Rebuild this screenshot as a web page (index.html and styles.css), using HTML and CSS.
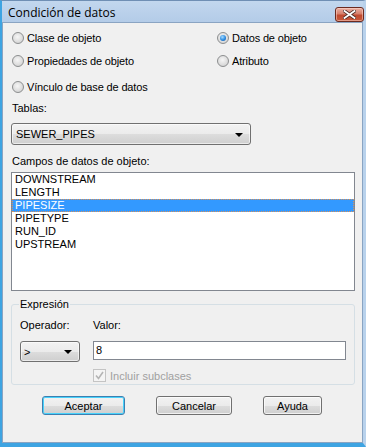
FILE: index.html
```html
<!DOCTYPE html>
<html lang="es">
<head>
  <meta charset="UTF-8" />
  <title>Condición de datos</title>
  <link rel="stylesheet" href="styles.css">
</head>
<body>
  <div class="window">
    <div class="titlebar">
      <span class="title">Condición de datos</span>
      <button class="close" aria-label="Cerrar">
        <svg width="13" height="9" viewBox="0 0 13 9">
          <path d="M1.5 1 L11.5 8 M11.5 1 L1.5 8" stroke="#4a2a24" stroke-width="3.4" stroke-linecap="square"/>
          <path d="M1.5 1 L11.5 8 M11.5 1 L1.5 8" stroke="#ffffff" stroke-width="1.8" stroke-linecap="square"/>
        </svg>
      </button>
    </div>

    <div class="client">
      <div class="options">
        <label class="radio"><span class="dot"></span>Clase de objeto</label>
        <label class="radio"><span class="dot on"></span>Datos de objeto</label>
        <label class="radio"><span class="dot"></span>Propiedades de objeto</label>
        <label class="radio"><span class="dot"></span>Atributo</label>
        <label class="radio"><span class="dot"></span>Vínculo de base de datos</label>
      </div>

      <div class="field-label tablas">Tablas:</div>
      <div class="combo tables">
        <span>SEWER_PIPES</span>
        <span class="arrow"></span>
      </div>

      <div class="field-label campos">Campos de datos de objeto:</div>
      <ul class="listbox">
        <li>DOWNSTREAM</li>
        <li>LENGTH</li>
        <li class="selected">PIPESIZE</li>
        <li>PIPETYPE</li>
        <li>RUN_ID</li>
        <li>UPSTREAM</li>
      </ul>

      <fieldset class="group">
        <legend>Expresión</legend>
        <div class="expr">
          <div class="expr-col">
            <div class="field-label">Operador:</div>
            <div class="combo operator">
              <span>&gt;</span>
              <span class="arrow"></span>
            </div>
          </div>
          <div class="expr-col grow">
            <div class="field-label">Valor:</div>
            <div class="textbox">8</div>
          </div>
        </div>
        <label class="check">
          <span class="box">
            <svg width="9" height="9" viewBox="0 0 9 9">
              <path d="M1 4.5 L3.5 7.5 L8 1" fill="none" stroke="#b4b4b4" stroke-width="1.6"/>
            </svg>
          </span>
          Incluir subclases
        </label>
      </fieldset>

      <div class="buttons">
        <button class="btn default ok">Aceptar</button>
        <button class="btn cancel">Cancelar</button>
        <button class="btn help">Ayuda</button>
      </div>
    </div>
  </div>
</body>
</html>
```

FILE: styles.css
```css
* {
  margin: 0;
  padding: 0;
  box-sizing: border-box;
}
body {
  width: 366px;
  height: 447px;
  background: #ffffff;
  font-family: "Liberation Sans", Arial, sans-serif;
  font-size: 11px;
  color: #000;
  overflow: hidden;
}
.window {
  width: 366px;
  height: 447px;
  display: flex;
  flex-direction: column;
  background: linear-gradient(#c2d7ee, #b4cce8 20px, #aac5e4);
  border-left: 2px solid #3ea4e2;
  border-right: 3px solid #b9d2ec;
  border-bottom: 4px solid #3ea4e2;
  border-top: 1px solid #6f8fb4;
}
.titlebar {
  height: 21px;
  display: flex;
  align-items: center;
  justify-content: space-between;
  padding: 0 0 0 6px;
}
.title {
  font-family: "Open Sans", "Noto Sans", sans-serif;
  font-size: 12px;
  color: #000;
  margin-top: 1px;
}
.close {
  width: 29px;
  height: 15px;
  margin-top: 6px;
  margin-right: -1px;
  border: 1px solid #6b2a1f;
  border-radius: 3px;
  background: linear-gradient(#eab0a3, #d7806c 45%, #c04a30 55%, #c85a3c);
  display: flex;
  align-items: center;
  justify-content: center;
  box-shadow: inset 0 0 0 1px rgba(255, 220, 210, 0.5);
}
.client {
  flex: 1;
  background: #f0f0f0;
  border: 1px solid #8aa4c2;
  padding: 7px 0 0 8px;
  display: flex;
  flex-direction: column;
}

/* radios */
.options {
  display: grid;
  grid-template-columns: 205px 1fr;
  grid-template-rows: 23px 26px 16px;
  padding-left: 1px;
}
.radio {
  display: flex;
  align-items: center;
  height: 16px;
  white-space: nowrap;
  letter-spacing: -0.15px;
}
.dot {
  width: 12px;
  height: 12px;
  margin-right: 3px;
  border-radius: 50%;
  border: 1px solid #8c8e8f;
  background: radial-gradient(circle at 45% 40%, #f6f6f6, #dcdcdc 60%, #c9c9c9);
  position: relative;
}
.dot.on::after {
  content: "";
  position: absolute;
  left: 2px;
  top: 2px;
  width: 6px;
  height: 6px;
  border-radius: 50%;
  background: radial-gradient(circle at 40% 35%, #a8dcff, #2a8ae0 55%, #0f4f9c);
}

.field-label {
  height: 13px;
  line-height: 13px;
  white-space: nowrap;
}
.tablas {
  margin-top: 7px;
  padding-left: 1px;
}
.campos {
  margin-top: 10px;
  padding-left: 1px;
}

/* combos */
.combo {
  display: flex;
  align-items: center;
  justify-content: space-between;
  border: 1px solid #707070;
  border-radius: 3px;
  background: linear-gradient(#f2f2f2, #ebebeb 50%, #dddddd 51%, #cfcfcf);
  box-shadow: inset 0 0 0 1px rgba(255, 255, 255, 0.6);
  padding: 0 7px 0 4px;
}
.tables {
  width: 240px;
  height: 22px;
  margin-top: 8px;
}
.operator {
  width: 60px;
  height: 21px;
  margin-top: 9px;
  padding-left: 3px;
}
.arrow {
  width: 0;
  height: 0;
  border-left: 4px solid transparent;
  border-right: 4px solid transparent;
  border-top: 4px solid #000;
  margin-top: 1px;
}

/* list */
.listbox {
  list-style: none;
  width: 344px;
  height: 119px;
  margin-top: 4px;
  border: 1px solid #828790;
  background: #fff;
}
.listbox li {
  height: 13px;
  line-height: 13px;
  padding-left: 3px;
}
.listbox li.selected {
  background: #3399ff;
  color: #fff;
  outline: 1px dotted #d9925a;
  outline-offset: -1px;
}

/* group */
.group {
  width: 344px;
  height: 87px;
  margin-top: 7px;
  border: 1px solid #d5dfe5;
  border-radius: 3px;
  padding: 0 0 0 8px;
}
.group legend {
  padding: 0 1px;
  margin-left: -1px;
  height: 13px;
  line-height: 13px;
}
.expr {
  display: flex;
  margin-top: 8px;
}
.expr-col {
  display: flex;
  flex-direction: column;
  width: 73px;
}
.expr-col.grow {
  width: auto;
}
.textbox {
  width: 253px;
  height: 19px;
  margin-top: 9px;
  border: 1px solid #828790;
  background: #fff;
  padding-left: 2px;
  line-height: 16px;
}
.check {
  display: flex;
  align-items: center;
  height: 13px;
  margin-top: 7px;
  margin-left: 73px;
  color: #a0a0a0;
}
.check .box {
  width: 13px;
  height: 13px;
  margin-right: 4px;
  border: 1px solid #c4c4c4;
  background: #f4f4f4;
  display: flex;
  align-items: center;
  justify-content: center;
}

/* buttons */
.buttons {
  display: flex;
  margin-top: 11px;
}
.btn {
  height: 19px;
  font-family: "Liberation Sans", Arial, sans-serif;
  font-size: 11px;
  color: #000;
  border: 1px solid #707070;
  border-radius: 3px;
  background: linear-gradient(#f2f2f2, #ebebeb 50%, #dddddd 51%, #cfcfcf);
  box-shadow: inset 0 0 0 1px rgba(255, 255, 255, 0.7);
}
.btn.default {
  border-color: #3c7fb1;
  box-shadow: inset 0 0 0 1px #48d2fb;
}
.ok {
  width: 83px;
  margin-left: 31px;
}
.cancel {
  width: 76px;
  margin-left: 31px;
}
.help {
  width: 59px;
  margin-left: 31px;
}
```
